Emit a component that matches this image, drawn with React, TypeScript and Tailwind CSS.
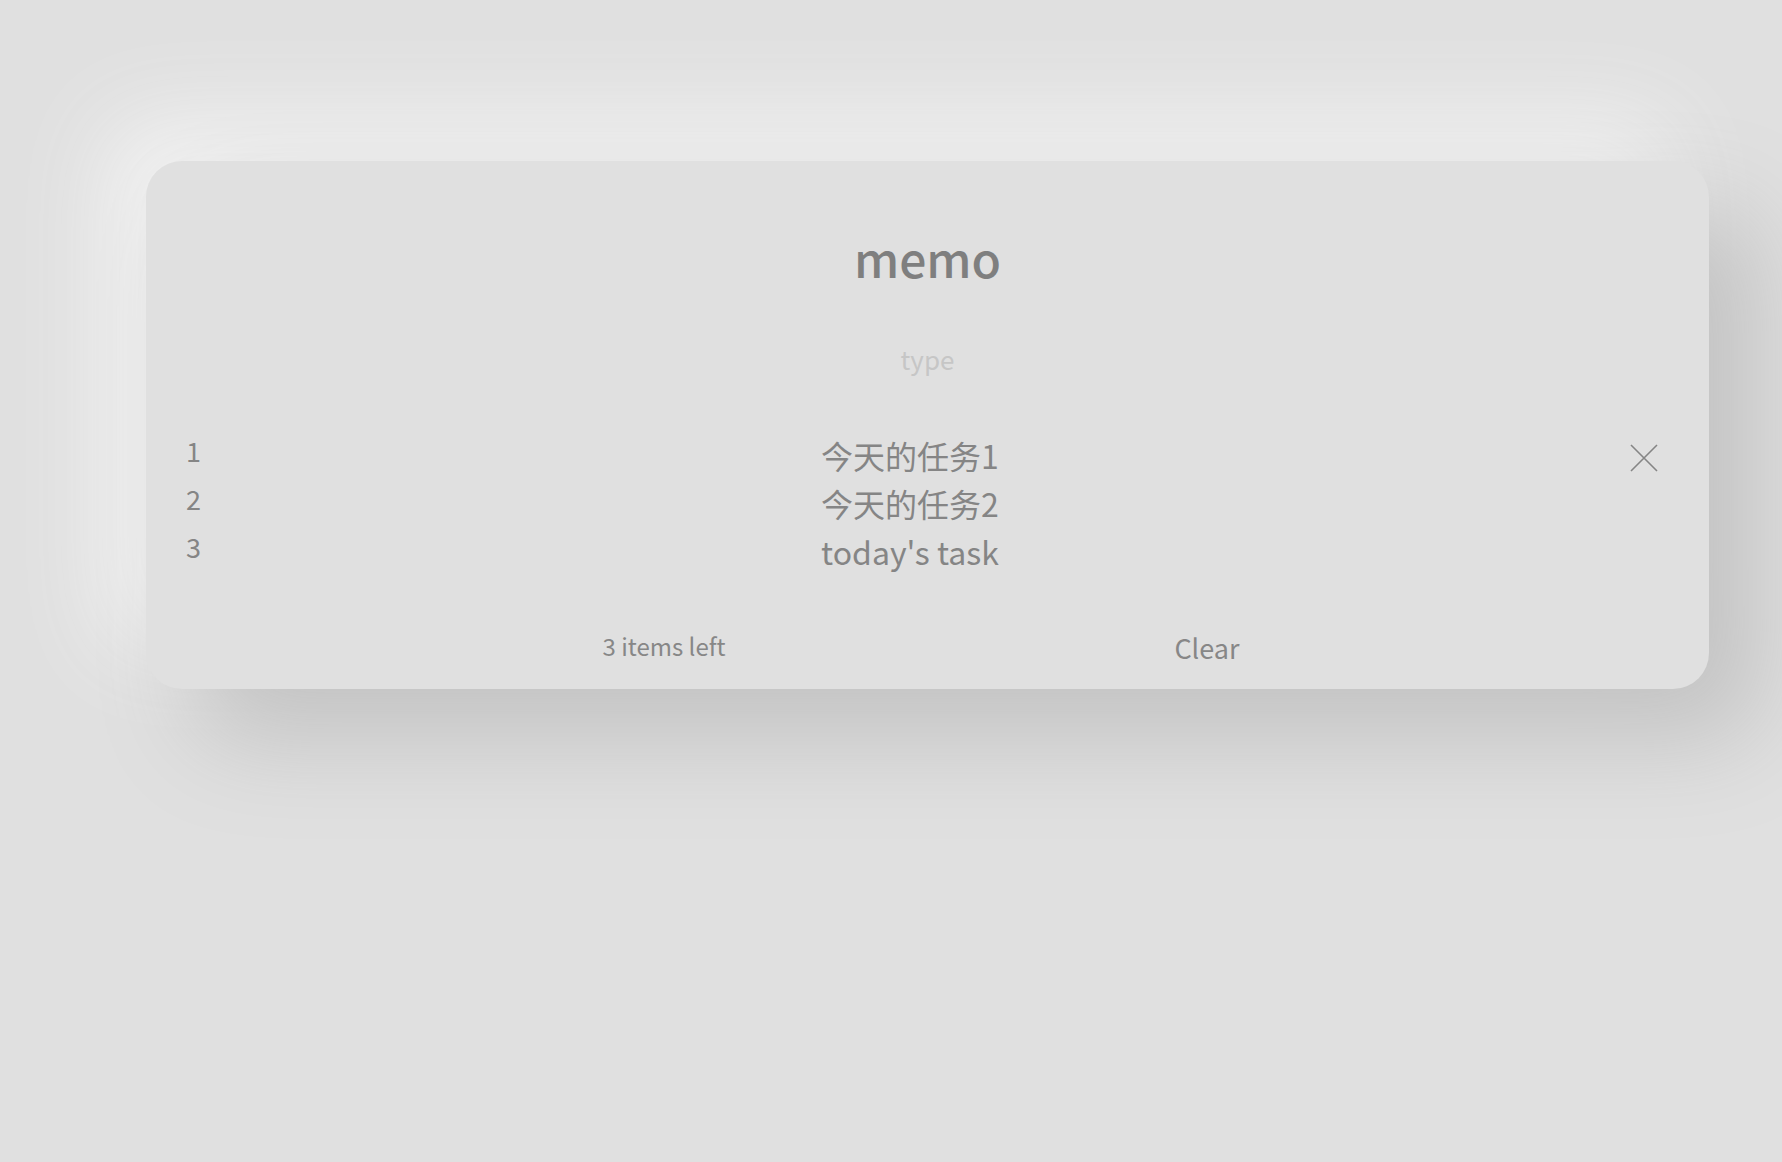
import React from "react"

const todos = [
  { id: 1, text: "今天的任务1" },
  { id: 2, text: "今天的任务2" },
  { id: 3, text: "today's task" },
]

function CloseIcon() {
  return (
    <svg width="28" height="28" viewBox="0 0 28 28" fill="none" stroke="#858585" strokeWidth="1.6">
      <path d="M1 1L27 27M27 1L1 27" />
    </svg>
  )
}

export default function App() {
  const [value, setValue] = React.useState("")

  return (
    <div className="min-h-screen overflow-hidden bg-[#e0e0e0] pl-[146px] pt-[161px] font-['Noto_Sans_CJK_SC',sans-serif]">
      <div className="w-[1563px] rounded-[36px] bg-[#e0e0e0] pt-[60px] pb-[21px] shadow-[50px_50px_100px_#c2c2c2,-40px_-40px_90px_#f3f3f3]">
        {/* Header */}
        <h1 className="text-center text-[48px] font-medium leading-[73px] text-[#7f7f7f]">memo</h1>

        <div className="mt-[41px] flex justify-center">
          <input
            value={value}
            onChange={(e) => setValue(e.target.value)}
            placeholder="type"
            className="h-[46px] w-[400px] bg-transparent text-center text-[26px] text-[#808080] outline-none placeholder:text-[#c6c6c6]"
          />
        </div>

        {/* List */}
        <ul className="mt-[50px] pl-[38px] pr-[51px]">
          {todos.map((todo, i) => (
            <li key={todo.id} className="flex h-[48px] items-start">
              <span className="w-[40px] pl-[2px] text-[27px] leading-[40px] text-[#858585]">{todo.id}</span>
              <span className="flex-1 text-center text-[32px] leading-[48px] text-[#858585]">{todo.text}</span>
              <span className="flex w-[62px] justify-end pt-[13px]">{i === 0 && <CloseIcon />}</span>
            </li>
          ))}
        </ul>

        {/* Footer */}
        <div className="mt-[51px] pl-[38px] pr-[51px]">
          <div className="mx-auto flex w-[637px] items-start justify-between">
            <span className="text-[24px] leading-[40px] text-[#878787]">{todos.length} items left</span>
            <button className="mt-[2px] text-[27px] leading-[40px] text-[#878787]">Clear</button>
          </div>
        </div>
      </div>
    </div>
  )
}
